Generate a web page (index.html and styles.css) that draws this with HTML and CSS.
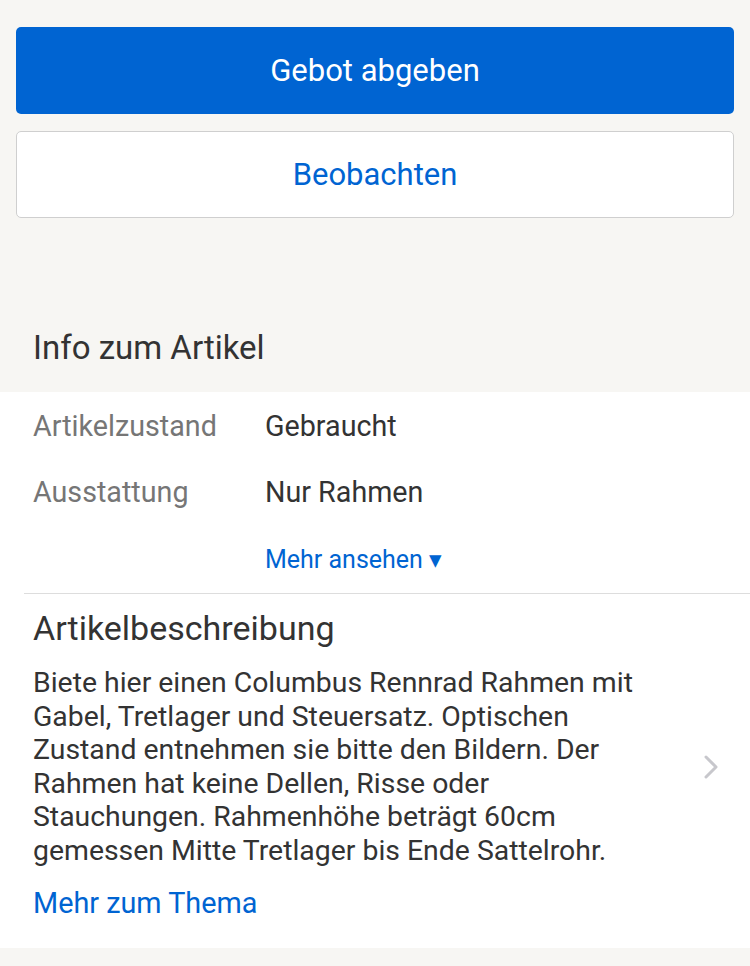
FILE: index.html
```html
<!DOCTYPE html>
<html lang="de">
<head>
<meta charset="utf-8">
<link rel="stylesheet" href="styles.css">
</head>
<body>
<div class="page">
  <section class="actions">
    <button class="btn btn-primary">Gebot abgeben</button>
    <button class="btn btn-secondary">Beobachten</button>
  </section>
  <h2 class="section-title">Info zum Artikel</h2>
  <section class="card">
    <div class="specs">
      <div class="spec-row"><span class="spec-label">Artikelzustand</span><span class="spec-value">Gebraucht</span></div>
      <div class="spec-row"><span class="spec-label">Ausstattung</span><span class="spec-value">Nur Rahmen</span></div>
      <div class="spec-row more-row"><span class="spec-label"></span><a class="link more-link">Mehr ansehen ▾</a></div>
    </div>
    <div class="desc">
      <h3 class="desc-title">Artikelbeschreibung</h3>
      <div class="desc-body">
        <p class="desc-text">Biete hier einen Columbus Rennrad Rahmen mit Gabel, Tretlager und Steuersatz. Optischen Zustand entnehmen sie bitte den Bildern. Der Rahmen hat keine Dellen, Risse oder Stauchungen. Rahmenhöhe beträgt 60cm gemessen Mitte Tretlager bis Ende Sattelrohr.</p>
        <svg class="chevron" width="14" height="24" viewBox="0 0 14 24"><path d="M2 2 L12 12 L2 22" fill="none" stroke="#c7c7cc" stroke-width="3" stroke-linecap="round" stroke-linejoin="round"/></svg>
      </div>
      <a class="link topic-link">Mehr zum Thema</a>
    </div>
  </section>
</div>
</body>
</html>
```
FILE: styles.css
```css
* { box-sizing: border-box; }
html, body { margin: 0; padding: 0; }
body {
  background: #f7f6f3;
  font-family: Roboto, "Noto Sans", sans-serif;
  color: #333;
  width: 750px;
  height: 966px;
  overflow: hidden;
}
.page { display: flex; flex-direction: column; }
.actions {
  display: flex;
  flex-direction: column;
  gap: 17px;
  padding: 27px 16px 0;
}
.btn {
  height: 87px;
  border-radius: 5px;
  font-family: inherit;
  font-size: 31px;
  cursor: pointer;
}
.btn-primary {
  background: #0064d2;
  color: #fff;
  border: none;
}
.btn-secondary {
  background: #fff;
  color: #0064d2;
  border: 1px solid #cfcfcf;
}
.section-title {
  margin: 0;
  height: 174px;
  font-size: 33px;
  font-weight: 400;
  color: #333;
  line-height: 36px;
  padding: 112px 33px 0;
}
.card {
  background: #fff;
  height: 556px;
}
.specs {
  padding: 1px 0 0 33px;
}
.spec-row {
  display: flex;
  height: 66px;
  align-items: center;
  font-size: 28.7px;
}
.spec-label {
  width: 232px;
  color: #767676;
}
.spec-value { color: #333; }
.more-row { height: 68px; font-size: 25px; }
.link { color: #0064d2; }
.desc {
  margin-left: 24px;
  border-top: 1px solid #dddddd;
  padding: 14px 0 0 9px;
}
.desc-title {
  margin: 0;
  font-size: 34px;
  font-weight: 400;
  line-height: 40px;
  color: #333;
}
.desc-body {
  display: flex;
  align-items: center;
  justify-content: space-between;
  padding-right: 32px;
  margin-top: 18px;
}
.desc-text {
  margin: 0;
  flex: none;
  width: 615px;
  font-size: 28.4px;
  line-height: 33.5px;
  color: #333;
}
.chevron { flex: none; }
.topic-link {
  display: block;
  margin-top: 18px;
  font-size: 28.8px;
  line-height: 36px;
}
```
